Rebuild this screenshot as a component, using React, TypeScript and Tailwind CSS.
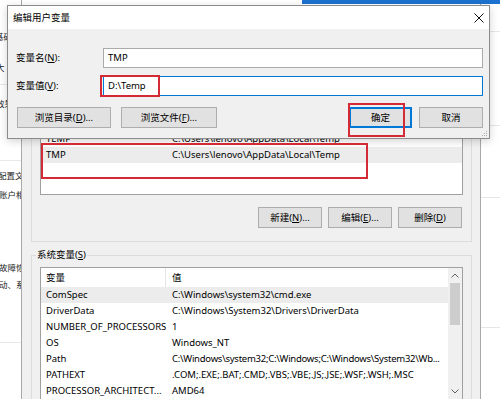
import React from "react";

const FONT = "font-['Noto_Sans','Noto_Sans_CJK_SC',sans-serif]";

function Btn({ children, w, def }: { children: React.ReactNode; w: string; def?: boolean }) {
  return (
    <div
      className={`flex h-[21px] shrink-0 items-center justify-center bg-[#e1e1e1] ${w} ${
        def ? "border-2 border-[#0078d7]" : "border border-[#adadad]"
      }`}
    >
      {children}
    </div>
  );
}

function Row({ name, value, hl, tight }: { name: string; value: string; hl?: boolean; tight?: boolean }) {
  return (
    <div className={`flex h-[16px] shrink-0 items-center whitespace-nowrap ${hl ? "bg-[#ececec]" : ""}`}>
      <div className="w-[125px] shrink-0 overflow-hidden pl-[5px]">{name}</div>
      <div className={`w-[282px] shrink-0 overflow-hidden pl-[6px] ${tight ? "tracking-[-0.25px]" : ""}`}>{value}</div>
    </div>
  );
}

function Chevron({ up }: { up?: boolean }) {
  return (
    <svg width="8" height="5" viewBox="0 0 8 5">
      <polyline
        points={up ? "0.5,4.5 4,1 7.5,4.5" : "0.5,0.5 4,4 7.5,0.5"}
        fill="none"
        stroke="#606060"
        strokeWidth="1"
      />
    </svg>
  );
}

export default function App() {
  const sysRows = [
    ["ComSpec", "C:\\Windows\\system32\\cmd.exe"],
    ["DriverData", "C:\\Windows\\System32\\Drivers\\DriverData"],
    ["NUMBER_OF_PROCESSORS", "1"],
    ["OS", "Windows_NT"],
    ["Path", "C:\\Windows\\system32;C:\\Windows;C:\\Windows\\System32\\Wb..."],
    ["PATHEXT", ".COM;.EXE;.BAT;.CMD;.VBS;.VBE;.JS;.JSE;.WSF;.WSH;.MSC"],
    ["PROCESSOR_ARCHITECT...", "AMD64"],
  ];

  return (
    <div className={`relative h-[399px] w-[500px] overflow-hidden bg-white text-[9.5px] leading-none text-black ${FONT}`}>
      <div className="flex h-full">
        {/* settings page strip on the left */}
        <div className="flex w-[21px] shrink-0 flex-col overflow-hidden whitespace-nowrap text-[8.5px] text-[#1a1a1a]">
          <div className="ml-[-5px] mt-[33px]">基础</div>
          <div className="ml-[-4px] mt-[22px]">大 多</div>
          <div className="mt-[12px] h-[1px] w-full bg-[#e8e8e8]" />
          <div className="ml-[-4px] mt-[15px]">效果</div>
          <div className="mt-[51px] h-[1px] w-full bg-[#e8e8e8]" />
          <div className="ml-[-2px] mt-[11px]">配置文件</div>
          <div className="ml-[-1px] mt-[11px]">账户相关</div>
          <div className="ml-[-1px] mt-[64px]">故障恢复</div>
          <div className="ml-[-1px] mt-[9px]">动、系统</div>
          <div className="mt-[52px] h-[1px] w-full bg-[#e8e8e8]" />
        </div>

        {/* environment variables dialog */}
        <div className="flex w-[460px] shrink-0 flex-col border-x border-[#a9a9a9] bg-[#f0f0f0]">
          <div className="h-[5px] shrink-0 bg-white" />
          {/* user variables group */}
          <div className="ml-[9px] mt-[9px] flex h-[228px] w-[441px] shrink-0 flex-col border border-[#dcdcdc] px-[8px] pb-[13px] pt-[43px]">
            <div className="flex h-[137px] w-[423px] shrink-0 flex-col overflow-hidden border border-[#a0a0a0] bg-white">
              {/* header and first rows lie under the edit dialog */}
              <div className="h-[72px] shrink-0" />
              <Row name="TEMP" value="C:\Users\lenovo\AppData\Local\Temp" />
              <Row name="TMP" value="C:\Users\lenovo\AppData\Local\Temp" hl />
            </div>
            <div className="mt-[12px] flex justify-end gap-[6px] pr-[1px]">
              <Btn w="w-[64px]">新建(<u>N</u>)...</Btn>
              <Btn w="w-[64px]">编辑(<u>E</u>)...</Btn>
              <Btn w="w-[64px]">删除(<u>D</u>)</Btn>
            </div>
          </div>

          {/* system variables group */}
          <div className="relative ml-[9px] mt-[13px] flex w-[441px] shrink-0 flex-col border border-[#dcdcdc] px-[8px] pt-[11px]">
            <div className="absolute left-[4px] top-[-6px] bg-[#f0f0f0] px-[1px]">
              系统变量(<u>S</u>)
            </div>
            <div className="flex h-[133px] w-[423px] shrink-0 overflow-hidden border border-[#a0a0a0] bg-white">
              <div className="flex flex-1 flex-col">
                <div className="flex h-[19px] shrink-0 items-center">
                  <div className="flex h-full w-[125px] items-center border-r border-[#e5e5e5] pl-[5px]">变量</div>
                  <div className="pl-[6px]">值</div>
                </div>
                {sysRows.map(([n, v], i) => (
                  <Row key={n} name={n} value={v} hl={i === 0} tight={n === "Path"} />
                ))}
              </div>
              <div className="flex w-[14px] shrink-0 flex-col items-center bg-[#f0f0f0]">
                <div className="flex h-[15px] w-full items-center justify-center">
                  <Chevron up />
                </div>
                <div className="h-[42px] w-[10px] bg-[#cdcdcd]" />
                <div className="flex-1" />
                <div className="flex h-[15px] w-full items-center justify-center">
                  <Chevron />
                </div>
              </div>
            </div>
          </div>
        </div>

        {/* settings page strip on the right */}
        <div className="flex flex-1 flex-col">
          <div className="h-[32px] shrink-0 border-b border-[#e6e6e6]" />
          <div className="h-[94px] shrink-0 border-b border-[#e6e6e6]" />
          <div className="h-[72px] shrink-0 border-b border-[#e6e6e6]" />
          <div className="h-[130px] shrink-0 border-b border-[#e6e6e6]" />
        </div>
      </div>

      {/* blue title bar strip of window behind */}
      <div className="absolute left-[302px] top-0 h-[4px] w-[198px] bg-[#1c72cf]" />

      {/* edit user variable dialog */}
      <div className="absolute left-[7px] top-[5px] flex h-[134px] w-[483px] flex-col border border-[#8c8c8c] shadow-[0_2px_8px_rgba(0,0,0,0.18)]">
        <div className="flex h-[23px] shrink-0 items-center justify-between bg-white pl-[5px] pr-[4px]">
          <span>编辑用户变量</span>
          <svg width="10" height="10" viewBox="0 0 10 10" className="mr-[1px]">
            <line x1="0.5" y1="0.5" x2="9.5" y2="9.5" stroke="#111" strokeWidth="1" />
            <line x1="9.5" y1="0.5" x2="0.5" y2="9.5" stroke="#111" strokeWidth="1" />
          </svg>
        </div>
        <div className="relative flex flex-1 flex-col bg-[#f0f0f0] pl-[8px] pr-[6px] pt-[19px]">
          <div className="flex h-[20px] items-center">
            <div className="w-[87px] shrink-0">变量名(<u>N</u>):</div>
            <div className="flex h-full flex-1 items-center border border-[#ababab] bg-white pl-[4px]">TMP</div>
          </div>
          <div className="mt-[8px] flex h-[20px] items-center">
            <div className="w-[87px] shrink-0">变量值(<u>V</u>):</div>
            <div className="flex h-full flex-1 items-center border border-[#0078d7] bg-white pl-[4px]">D:\Temp</div>
          </div>
          <div className="mt-[11px] flex items-center">
            <div className="ml-[1px]">
              <Btn w="w-[94px]">浏览目录(<u>D</u>)...</Btn>
            </div>
            <div className="ml-[10px]">
              <Btn w="w-[96px]">浏览文件(<u>F</u>)...</Btn>
            </div>
            <div className="flex-1" />
            <Btn w="w-[63px]" def>
              确定
            </Btn>
            <div className="ml-[7px]">
              <Btn w="w-[64px]">取消</Btn>
            </div>
          </div>
          <svg width="8" height="8" viewBox="0 0 8 8" className="absolute bottom-[1px] right-[1px]">
            <rect x="6" y="2" width="1" height="1" fill="#b0b0b0" />
            <rect x="4" y="4" width="1" height="1" fill="#b0b0b0" />
            <rect x="6" y="4" width="1" height="1" fill="#b0b0b0" />
            <rect x="2" y="6" width="1" height="1" fill="#b0b0b0" />
            <rect x="4" y="6" width="1" height="1" fill="#b0b0b0" />
            <rect x="6" y="6" width="1" height="1" fill="#b0b0b0" />
          </svg>
        </div>
      </div>

      {/* red annotation boxes */}
      <div className="absolute left-[100px] top-[75px] h-[22px] w-[60px] border-2 border-[#d42a35]" />
      <div className="absolute left-[348px] top-[103px] h-[34px] w-[57px] border-2 border-[#d42a35]" />
      <div className="absolute left-[41px] top-[143px] h-[36px] w-[327px] border-2 border-[#d42a35]" />
    </div>
  );
}
